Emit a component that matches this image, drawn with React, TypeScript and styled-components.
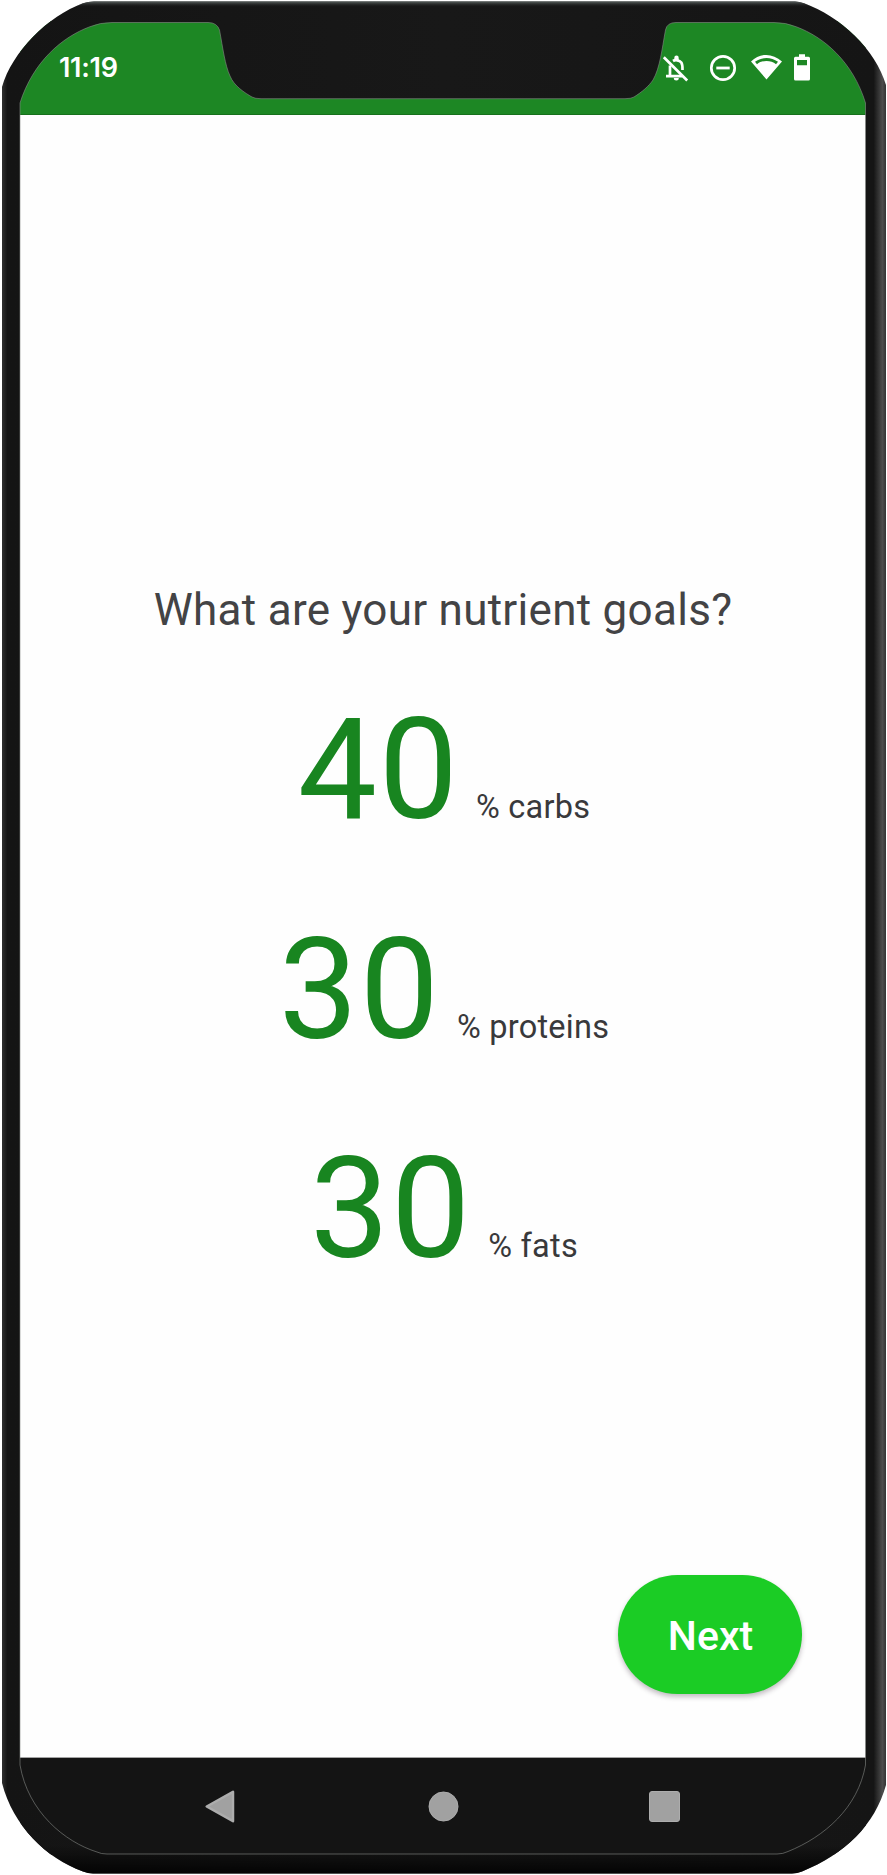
import React from "react";
import styled, { createGlobalStyle } from "styled-components";

const GlobalStyle = createGlobalStyle`
  * { box-sizing: border-box; }
  body { margin: 0; background: #fff; }
`;

const Phone = styled.div`
  position: relative;
  width: 887px;
  height: 1875px;
  padding: 21px 21px 20px 20px;
  overflow: hidden;
  font-family: Roboto, sans-serif;
`;

const Screen = styled.div`
  display: flex;
  flex-direction: column;
  height: 100%;
  background: #fefefe;
`;

const StatusBar = styled.header`
  display: flex;
  justify-content: space-between;
  height: 94px;
  padding: 32px 55px 0 39px;
  background: #1d8724;
  border-bottom: 1px solid #17701c;
  color: #fff;
`;

const Clock = styled.time`
  font: 600 27px/30px Inter, sans-serif;
  letter-spacing: -0.3px;
`;

const StatusIcons = styled.div`
  display: flex;
  align-items: flex-start;
`;

const Content = styled.main`
  flex: 1;
  display: flex;
  flex-direction: column;
  align-items: center;
  padding: 465px 54px 0;
`;

const Title = styled.h1`
  margin: 0 0 48px;
  color: #434345;
  font-size: 44px;
  font-weight: 400;
  line-height: 60px;
  letter-spacing: 0.28px;
  white-space: nowrap;
`;

const Goals = styled.div`
  display: flex;
  flex-direction: column;
  align-items: center;
  gap: 55.5px;
  padding-left: 2px;
`;

const Goal = styled.div`
  display: flex;
  align-items: baseline;
  gap: 16px;
`;

const Amount = styled.span`
  color: #188520;
  font-size: 141px;
  line-height: 164px;
  letter-spacing: 1.8px;
`;

const Unit = styled.span`
  color: #39393b;
  font-size: 32.5px;
  letter-spacing: 0.25px;
`;

const NextButton = styled.button`
  align-self: flex-end;
  margin: auto 10px 63px 0;
  width: 184px;
  height: 119px;
  padding: 3px 0 0 1px;
  border: 0;
  border-radius: 60px;
  background: #1bcc25;
  box-shadow: 0 3px 5px rgba(40, 20, 40, 0.28);
  color: #fff;
  font: 500 41px Roboto, sans-serif;
`;

const NavBar = styled.nav`
  display: flex;
  align-items: center;
  justify-content: space-between;
  height: 98px;
  padding: 0 186px 1px 185px;
  background: #141414;
  border-top: 1px solid #a4a4a4;
`;

const Bezel = styled.svg`
  position: absolute;
  inset: 0;
  pointer-events: none;
`;

const outerPath =
  "M94 1.5H795Q799 1.5 804 3.3C840 16 876 50 886 85V1785C875 1825 845 1854 802 1871.5Q797 1873.5 792 1873.5H93Q88 1873.5 83 1871.5C46 1858 13 1826 2 1783V87C12 52 48 16 83 3.3Q88 1.5 94 1.5Z";
const innerPath =
  "M112 22.5H208Q217 22.5 219.5 30C223 49 225 65 230 76C234 86 245 93 252 97Q255 98.7 261 98.7H625Q631 98.7 634 97C642 92 649 86 653 80C660 68 662 49 665.5 30Q667 22.5 676 22.5H774Q786 22.5 796 26.7C824 37 853 62 865.5 103V1765C858 1808 824 1837 788 1851.5Q783 1854 777 1854H107Q101 1854 97 1852C65 1842 28 1812 20 1765V103C33 62 62 37 90 26.7Q100 22.5 112 22.5Z";

function DeviceFrame() {
  return (
    <Bezel width="887" height="1875" viewBox="0 0 887 1875" aria-hidden="true">
      <defs>
        <linearGradient id="edge" x1="0" x2="1">
          <stop offset="0" stopColor="#303030" />
          <stop offset=".006" stopColor="#141414" />
          <stop offset=".5" stopColor="#181818" />
          <stop offset=".986" stopColor="#151515" />
          <stop offset=".996" stopColor="#4c4c4c" />
          <stop offset="1" stopColor="#333" />
        </linearGradient>
        <linearGradient id="fade" x1="0" x2="0" y1="0" y2="1">
          <stop offset="0" stopColor="#5a6260" />
          <stop offset=".003" stopColor="#1a1a1a" stopOpacity="0" />
          <stop offset=".985" stopColor="#000" stopOpacity="0" />
          <stop offset="1" stopColor="#000" stopOpacity=".85" />
        </linearGradient>
      </defs>
      <path d={"M0 0H887V1875H0Z" + outerPath} fill="#fff" fillRule="evenodd" />
      <path d={outerPath + innerPath} fill="url(#edge)" fillRule="evenodd" />
      <path d={outerPath + innerPath} fill="url(#fade)" fillRule="evenodd" />
      <path d={innerPath} fill="none" stroke="#868986" strokeOpacity=".6" strokeWidth="1" />
    </Bezel>
  );
}

function StatusGlyphs() {
  return (
    <svg width="150" height="32" viewBox="661 53 150 32" fill="#fff" aria-label="Status icons">
      <g fill="none" stroke="#fff" strokeWidth="2.7">
        <path d="M663.8 57.2L687.2 80.5" />
        <path d="M673 61C675 59.7 679.5 59.9 681.3 62.5C682.6 64.5 682.5 67 682.5 70M670 65.5V76M666 76.2H682" />
      </g>
      <path d="M674.3 60V57.8a2.2 2.2 0 0 1 4.4 0V60zM673.8 78h5a2.5 2.5 0 0 1-5 0z" />
      <circle cx="723" cy="68" r="11.7" fill="none" stroke="#fff" strokeWidth="2.7" />
      <path d="M716.3 66.6h13.4v2.8h-13.4z" />
      <path
        fillRule="evenodd"
        d="M751 61.5C760 52.7 772.5 52.7 782 61.5L766.5 79.5ZM755 61.8L757 64.2C762 59.8 771 59.8 776 64.2L778 61.8C771 56.7 762 56.7 755 61.8Z"
      />
      <path
        fillRule="evenodd"
        d="M799 54.3H805V56.7H808.5Q810 56.7 810 58.3V79Q810 80.5 808.5 80.5H795.5Q794 80.5 794 79V58.3Q794 56.7 795.5 56.7H799ZM797 60V65.3H807V60Z"
      />
    </svg>
  );
}

const goals = [
  { amount: 40, unit: "% carbs" },
  { amount: 30, unit: "% proteins" },
  { amount: 30, unit: "% fats" },
];

export default function App() {
  return (
    <>
      <GlobalStyle />
      <Phone>
        <Screen>
          <StatusBar>
            <Clock>11:19</Clock>
            <StatusIcons>
              <StatusGlyphs />
            </StatusIcons>
          </StatusBar>
          <Content>
            <Title>What are your nutrient goals?</Title>
            <Goals>
              {goals.map((goal) => (
                <Goal key={goal.unit}>
                  <Amount>{goal.amount}</Amount>
                  <Unit>{goal.unit}</Unit>
                </Goal>
              ))}
            </Goals>
            <NextButton>Next</NextButton>
          </Content>
          <NavBar>
            <svg width="32" height="33" viewBox="0 0 32 33" aria-label="Back">
              <path d="M1.7 16.5L28 1.8V31.2Z" fill="#a1a1a1" stroke="#adadad" strokeWidth="2.5" strokeLinejoin="round" />
            </svg>
            <svg width="31" height="31" viewBox="0 0 31 31" aria-label="Home">
              <circle cx="15.5" cy="15.5" r="14.5" fill="#a1a1a1" stroke="#adadad" />
            </svg>
            <svg width="31" height="31" viewBox="0 0 31 31" aria-label="Recents">
              <rect x="0.5" y="0.5" width="30" height="30" rx="2.5" fill="#a1a1a1" stroke="#adadad" />
            </svg>
          </NavBar>
        </Screen>
        <DeviceFrame />
      </Phone>
    </>
  );
}
